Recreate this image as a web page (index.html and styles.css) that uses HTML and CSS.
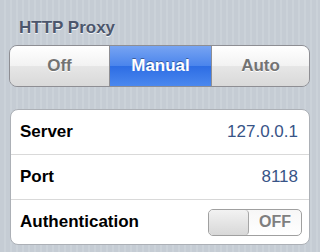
FILE: index.html
```html
<!DOCTYPE html>
<html>
<head>
<meta charset="utf-8">
<link rel="stylesheet" href="styles.css">
</head>
<body>
<div class="screen">
  <div class="section-title">HTTP Proxy</div>
  <div class="segmented">
    <div class="seg">Off</div>
    <div class="seg active">Manual</div>
    <div class="seg">Auto</div>
  </div>
  <div class="table">
    <div class="row">
      <span class="label">Server</span>
      <span class="value">127.0.0.1</span>
    </div>
    <div class="row">
      <span class="label">Port</span>
      <span class="value">8118</span>
    </div>
    <div class="row">
      <span class="label">Authentication</span>
      <div class="switch">
        <div class="knob"></div>
        <div class="switch-text">OFF</div>
      </div>
    </div>
  </div>
</div>
</body>
</html>
```

FILE: styles.css
```css
html, body {
  margin: 0;
  padding: 0;
}
body {
  width: 320px;
  height: 252px;
  overflow: hidden;
  font-family: "Liberation Sans", Arial, sans-serif;
  background: repeating-linear-gradient(90deg, #c5ccd4 0 4px, #cbd2d9 4px 6px);
}
.screen {
  display: flex;
  flex-direction: column;
}
.section-title {
  padding: 18px 0 0 19px;
  height: 20px;
  line-height: 20px;
  font-size: 17px;
  font-weight: bold;
  color: #4c566c;
  text-shadow: 0 1px 0 rgba(255,255,255,0.8);
}
.segmented {
  margin: 7px 10px 0 9px;
  height: 42px;
  display: flex;
  border: 1px solid #8e8e93;
  border-radius: 8px;
  overflow: hidden;
  box-sizing: border-box;
}
.seg {
  flex: 0 0 auto;
  display: flex;
  align-items: center;
  justify-content: center;
  font-size: 17px;
  font-weight: bold;
  color: #737373;
  text-shadow: 0 1px 0 #fff;
  background: linear-gradient(#ffffff 0%, #f2f2f2 50%, #e6e6e6 51%, #d9d9d9 100%);
}
.seg:nth-child(1) { width: 99px; border-right: 1px solid #8e8e93; }
.seg:nth-child(2) { width: 101px; }
.seg:nth-child(3) { flex: 1; border-left: 1px solid #8e8e93; }
.seg.active {
  color: #fff;
  text-shadow: 0 -1px 0 rgba(0,0,0,0.35);
  background: linear-gradient(#77a4f2 0%, #4a84ec 50%, #2d6de4 51%, #4b88ee 100%);
}
.table {
  margin: 22px 10px 0 10px;
  background: #fff;
  border: 1px solid #acb0b6;
  border-radius: 8px;
}
.row {
  height: 44px;
  display: flex;
  align-items: center;
  justify-content: space-between;
  padding: 0 11px 0 9px;
}
.row + .row {
  border-top: 1px solid #d9d9d9;
}
.row:last-child {
  padding-right: 7px;
}
.label {
  font-size: 17px;
  font-weight: bold;
  color: #000;
}
.value {
  font-size: 17px;
  color: #385487;
}
.switch {
  width: 94px;
  height: 27px;
  box-sizing: border-box;
  border: 1px solid #a0a0a0;
  border-radius: 5px;
  overflow: hidden;
  display: flex;
  background: linear-gradient(#f7f7f7, #ffffff);
}
.knob {
  width: 39px;
  border-right: 1px solid #a6a6a6;
  background: linear-gradient(#f2f2f2 0%, #e5e5e5 50%, #d8d8d8 100%);
  border-radius: 4px;
}
.switch-text {
  flex: 1;
  display: flex;
  align-items: center;
  justify-content: center;
  font-size: 16px;
  font-weight: bold;
  color: #7f7f7f;
}
```
